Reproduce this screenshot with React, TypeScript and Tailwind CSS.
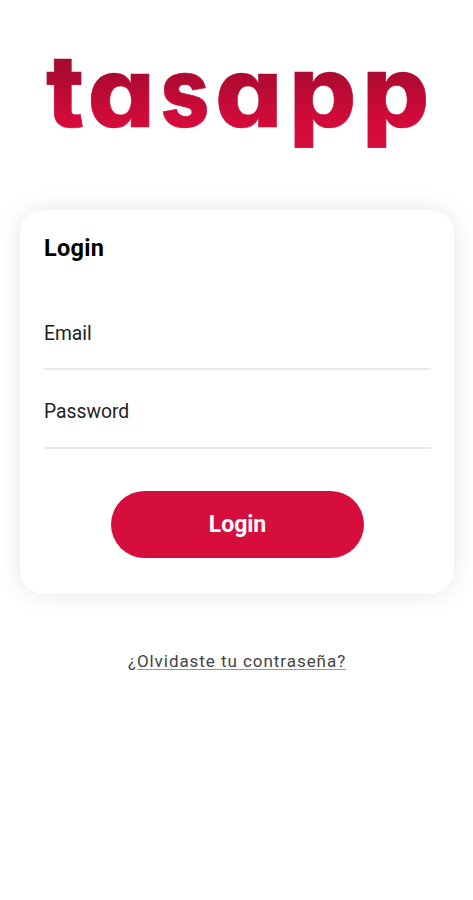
const fields = [
  { name: "email", label: "Email", height: "h-[60px]", gap: "pb-5" },
  { name: "password", label: "Password", height: "h-[79px]", gap: "pb-[21px]" },
];

// x, baseline and stretch of each letter in the wordmark
const letters = [
  { char: "t", x: 46, y: 127, sx: 1.03, sy: 1.03 },
  { char: "a", x: 87.4, y: 127, sx: 1.09, sy: 1.01 },
  { char: "s", x: 160.2, y: 127, sx: 0.885, sy: 1 },
  { char: "a", x: 215, y: 127, sx: 1.09, sy: 1.01 },
  { char: "p", x: 289, y: 127.3, sx: 1.09, sy: 1.03 },
  { char: "p", x: 362, y: 127.3, sx: 1.09, sy: 1.03 },
];

function Logo() {
  return (
    <svg className="block h-[170px] w-full shrink-0" viewBox="0 0 473 170" role="img" aria-label="tasapp">
      <defs>
        <linearGradient id="brand" x1="0" y1="0.28" x2="0" y2="0.95">
          <stop offset="0" stopColor="#a60a2f" />
          <stop offset="0.75" stopColor="#d50b3b" />
          <stop offset="1" stopColor="#d70d3d" />
        </linearGradient>
      </defs>
      {letters.map((l, i) => (
        <text
          key={i}
          transform={`translate(${l.x} ${l.y}) scale(${l.sx} ${l.sy})`}
          fill="url(#brand)"
          stroke="url(#brand)"
          strokeWidth="0.6"
          className="font-[Inter,sans-serif] text-[97px] font-extrabold [font-feature-settings:'cv11']"
        >
          {l.char}
        </text>
      ))}
    </svg>
  );
}

export default function App() {
  return (
    <main className="flex h-[900px] w-full flex-col overflow-hidden bg-white font-[Roboto,sans-serif] text-[#222]">
      <Logo />

      <section className="mt-10 mr-[19px] ml-5 flex h-[384px] flex-col rounded-[24px] bg-white px-6 shadow-[0_0_24px_rgba(0,0,0,0.1)]">
        <h1 className="h-[100px] pt-6 text-[23.5px] leading-7 font-bold tracking-[0.3px] text-black">Login</h1>

        {fields.map((field) => (
          <div
            key={field.name}
            className={`${field.height} ${field.gap} flex w-[387px] flex-col justify-end border-b-2 border-[#e9e9e9]`}
          >
            <span className="text-[19.3px] leading-7">{field.label}</span>
          </div>
        ))}

        <button className="mt-[42px] ml-[67px] h-[67px] w-[253px] rounded-full bg-[#d60e3e] pt-0.5 text-[23px] font-bold text-white">
          Login
        </button>
      </section>

      <a className="mt-[55px] self-center pl-px text-[17px] leading-6 tracking-[0.95px] text-[#444]">
        ¿<span className="underline decoration-[#999] underline-offset-2">Olvidaste tu contraseña?</span>
      </a>
    </main>
  );
}
